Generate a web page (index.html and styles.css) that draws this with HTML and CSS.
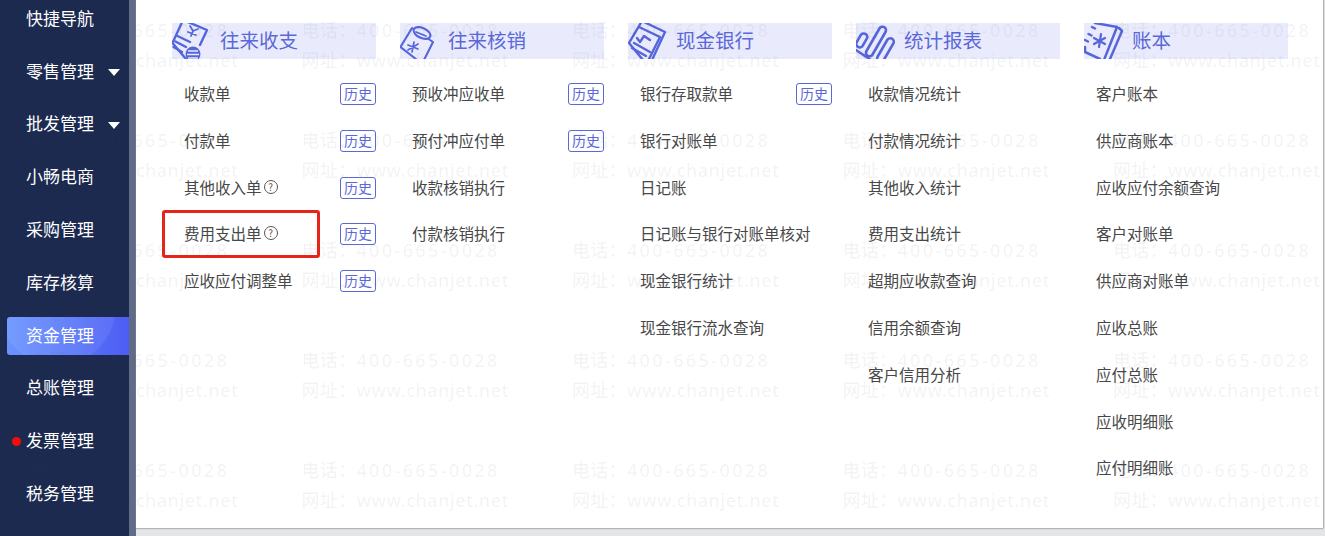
FILE: index.html
```html
<!DOCTYPE html>
<html lang="zh-CN">
<head>
<meta charset="utf-8">
<title>资金管理</title>
<link rel="stylesheet" href="styles.css">
</head>
<body>
<div class="app">
  <aside class="sidebar">
    <ul class="nav">
      <li class="nav-item">快捷导航</li>
      <li class="nav-item has-caret">零售管理</li>
      <li class="nav-item has-caret">批发管理</li>
      <li class="nav-item">小畅电商</li>
      <li class="nav-item">采购管理</li>
      <li class="nav-item">库存核算</li>
      <li class="nav-item active"><span class="nav-pill">资金管理</span></li>
      <li class="nav-item">总账管理</li>
      <li class="nav-item has-dot">发票管理</li>
      <li class="nav-item">税务管理</li>
    </ul>
  </aside>
  <div class="gutter"></div>
  <main class="panel">
    <section class="col">
      <h2 class="col-head">
        <svg class="col-icon" viewBox="0 0 36 36"><g fill="none" stroke="#5565dc" stroke-width="2.400" stroke-linejoin="round" stroke-linecap="round"><path d="M11-3L35 7 28 22M11-3L.5 20M.5 20L14 36"/><path d="M5.500 13L18 19M3.500 18.500L14 24M1.500 24L10 29"/><path d="M18 3l3 5 5-2M21 8l-2 5M16 9l8 3" stroke-width="1.800"/></g><circle cx="21" cy="31" r="7.500" fill="#5565dc"/><path d="M16 28h10M15 31.500h12M16 35h10" stroke="#e9ebfd" stroke-width="1.600"/></svg>
        <span class="head-text">往来收支</span>
      </h2>
      <ul class="rows">
        <li class="row"><span>收款单</span><a class="tag">历史</a></li>
        <li class="row"><span>付款单</span><a class="tag">历史</a></li>
        <li class="row"><span>其他收入单<i class="help">?</i></span><a class="tag">历史</a></li>
        <li class="row marked"><span>费用支出单<i class="help">?</i></span><a class="tag">历史</a></li>
        <li class="row"><span>应收应付调整单</span><a class="tag">历史</a></li>
      </ul>
    </section>
    <section class="col">
      <h2 class="col-head">
        <svg class="col-icon" viewBox="0 0 36 36"><g fill="none" stroke="#5565dc" stroke-width="2.100" stroke-linejoin="round" stroke-linecap="round"><path d="M.5 24L12 5l21 14-9 18M.5 24L16 36"/><ellipse cx="22" cy="10" rx="9" ry="5" transform="rotate(25 22 10)" fill="#e9ebfd"/><path d="M16 9l10 4" stroke-width="1.800"/><path d="M14 19l-2 10M8 22l10 4M8 27l10-6" stroke-width="1.700"/></g></svg>
        <span class="head-text">往来核销</span>
      </h2>
      <ul class="rows">
        <li class="row"><span>预收冲应收单</span><a class="tag">历史</a></li>
        <li class="row"><span>预付冲应付单</span><a class="tag">历史</a></li>
        <li class="row"><span>收款核销执行</span></li>
        <li class="row"><span>付款核销执行</span></li>
      </ul>
    </section>
    <section class="col">
      <h2 class="col-head">
        <svg class="col-icon" viewBox="0 0 36 36"><g fill="none" stroke="#5565dc" stroke-width="2.400" stroke-linejoin="round" stroke-linecap="round"><path d="M14-2L1 20l14 17M14-2L37 9 24 37"/><path d="M11 4L32 14 21 36"/><path d="M6 20l16 9M4 25l14 8M9 15l3 4 4-6 6 4"/></g></svg>
        <span class="head-text">现金银行</span>
      </h2>
      <ul class="rows">
        <li class="row"><span>银行存取款单</span><a class="tag">历史</a></li>
        <li class="row"><span>银行对账单</span></li>
        <li class="row"><span>日记账</span></li>
        <li class="row"><span>日记账与银行对账单核对</span></li>
        <li class="row"><span>现金银行统计</span></li>
        <li class="row"><span>现金银行流水查询</span></li>
      </ul>
    </section>
    <section class="col">
      <h2 class="col-head">
        <svg class="col-icon" viewBox="0 0 36 36"><g fill="none" stroke="#5565dc" stroke-width="2.600" stroke-linecap="round"><rect x="2.500" y="10" width="7" height="15" rx="3.500" transform="rotate(30 6 17)"/><rect x="16.500" y="2" width="7" height="33" rx="3.500" transform="rotate(30 20 18.500)"/><rect x="26" y="14" width="7" height="26" rx="3.500" transform="rotate(30 29.500 27)"/><path d="M0 27l15 10"/></g></svg>
        <span class="head-text">统计报表</span>
      </h2>
      <ul class="rows">
        <li class="row"><span>收款情况统计</span></li>
        <li class="row"><span>付款情况统计</span></li>
        <li class="row"><span>其他收入统计</span></li>
        <li class="row"><span>费用支出统计</span></li>
        <li class="row"><span>超期应收款查询</span></li>
        <li class="row"><span>信用余额查询</span></li>
        <li class="row"><span>客户信用分析</span></li>
      </ul>
    </section>
    <section class="col">
      <h2 class="col-head">
        <svg class="col-icon" viewBox="0 0 36 36"><g fill="none" stroke="#5565dc" stroke-width="2.500" stroke-linejoin="round" stroke-linecap="round"><path d="M11 0L33 4 20 37M1 24v5L16 36"/><path d="M35 5l3 3-12 28"/><path d="M8 4l3 1.500M4.500 11l3 1.500M1 17l3 1.500"/><path d="M17 11l-2 13M10 15l11 6M10 21l11-6" stroke-width="2.200"/></g></svg>
        <span class="head-text">账本</span>
      </h2>
      <ul class="rows">
        <li class="row"><span>客户账本</span></li>
        <li class="row"><span>供应商账本</span></li>
        <li class="row"><span>应收应付余额查询</span></li>
        <li class="row"><span>客户对账单</span></li>
        <li class="row"><span>供应商对账单</span></li>
        <li class="row"><span>应收总账</span></li>
        <li class="row"><span>应付总账</span></li>
        <li class="row"><span>应收明细账</span></li>
        <li class="row"><span>应付明细账</span></li>
      </ul>
    </section>
  </main>
</div>
<div class="watermark" aria-hidden="true">
  <div class="wm"><p class="tel"><span>电话：</span>400-665-0028</p><p class="web"><span>网址：</span>www.chanjet.net</p></div>
  <div class="wm"><p class="tel"><span>电话：</span>400-665-0028</p><p class="web"><span>网址：</span>www.chanjet.net</p></div>
  <div class="wm"><p class="tel"><span>电话：</span>400-665-0028</p><p class="web"><span>网址：</span>www.chanjet.net</p></div>
  <div class="wm"><p class="tel"><span>电话：</span>400-665-0028</p><p class="web"><span>网址：</span>www.chanjet.net</p></div>
  <div class="wm"><p class="tel"><span>电话：</span>400-665-0028</p><p class="web"><span>网址：</span>www.chanjet.net</p></div>
  <div class="wm"><p class="tel"><span>电话：</span>400-665-0028</p><p class="web"><span>网址：</span>www.chanjet.net</p></div>
  <div class="wm"><p class="tel"><span>电话：</span>400-665-0028</p><p class="web"><span>网址：</span>www.chanjet.net</p></div>
  <div class="wm"><p class="tel"><span>电话：</span>400-665-0028</p><p class="web"><span>网址：</span>www.chanjet.net</p></div>
  <div class="wm"><p class="tel"><span>电话：</span>400-665-0028</p><p class="web"><span>网址：</span>www.chanjet.net</p></div>
  <div class="wm"><p class="tel"><span>电话：</span>400-665-0028</p><p class="web"><span>网址：</span>www.chanjet.net</p></div>
  <div class="wm"><p class="tel"><span>电话：</span>400-665-0028</p><p class="web"><span>网址：</span>www.chanjet.net</p></div>
  <div class="wm"><p class="tel"><span>电话：</span>400-665-0028</p><p class="web"><span>网址：</span>www.chanjet.net</p></div>
  <div class="wm"><p class="tel"><span>电话：</span>400-665-0028</p><p class="web"><span>网址：</span>www.chanjet.net</p></div>
  <div class="wm"><p class="tel"><span>电话：</span>400-665-0028</p><p class="web"><span>网址：</span>www.chanjet.net</p></div>
  <div class="wm"><p class="tel"><span>电话：</span>400-665-0028</p><p class="web"><span>网址：</span>www.chanjet.net</p></div>
  <div class="wm"><p class="tel"><span>电话：</span>400-665-0028</p><p class="web"><span>网址：</span>www.chanjet.net</p></div>
  <div class="wm"><p class="tel"><span>电话：</span>400-665-0028</p><p class="web"><span>网址：</span>www.chanjet.net</p></div>
  <div class="wm"><p class="tel"><span>电话：</span>400-665-0028</p><p class="web"><span>网址：</span>www.chanjet.net</p></div>
  <div class="wm"><p class="tel"><span>电话：</span>400-665-0028</p><p class="web"><span>网址：</span>www.chanjet.net</p></div>
  <div class="wm"><p class="tel"><span>电话：</span>400-665-0028</p><p class="web"><span>网址：</span>www.chanjet.net</p></div>
  <div class="wm"><p class="tel"><span>电话：</span>400-665-0028</p><p class="web"><span>网址：</span>www.chanjet.net</p></div>
  <div class="wm"><p class="tel"><span>电话：</span>400-665-0028</p><p class="web"><span>网址：</span>www.chanjet.net</p></div>
  <div class="wm"><p class="tel"><span>电话：</span>400-665-0028</p><p class="web"><span>网址：</span>www.chanjet.net</p></div>
  <div class="wm"><p class="tel"><span>电话：</span>400-665-0028</p><p class="web"><span>网址：</span>www.chanjet.net</p></div>
  <div class="wm"><p class="tel"><span>电话：</span>400-665-0028</p><p class="web"><span>网址：</span>www.chanjet.net</p></div>
</div>
</body>
</html>
```
FILE: styles.css
```css
*, *::before, *::after { box-sizing: border-box; }
html, body { margin: 0; height: 536px; overflow: hidden; }
body {
  position: relative;
  background: #e4e5e7;
  font-family: "Noto Sans CJK SC", "Noto Sans", sans-serif;
}
ul { list-style: none; margin: 0; padding: 0; }
p, h2 { margin: 0; }

.app { display: flex; height: 536px; }

.sidebar { width: 129px; flex: none; background: #1c2a50; overflow: hidden; }
.nav { margin-top: -7.4px; }
.nav-item {
  position: relative;
  height: 52.8px;
  display: flex;
  align-items: center;
  padding: 0 0 3.5px 26px;
  color: #fff;
  font-size: 17px;
  white-space: nowrap;
}
.nav-item.active { padding: 0 0 0 7px; }
.nav-pill {
  flex: 1;
  height: 38px;
  line-height: 35px;
  padding-left: 19px;
  border-radius: 3px 0 0 3px;
  background:
    radial-gradient(circle at 50px -10px, rgba(255,255,255,.07) 58px, transparent 59px),
    linear-gradient(90deg, #6a94ff, #4c5df3);
}
.has-caret::after {
  content: "";
  position: absolute;
  left: 108px;
  top: 23.5px;
  border-left: 6px solid transparent;
  border-right: 6px solid transparent;
  border-top: 7px solid #fff;
}
.has-dot::before {
  content: "";
  position: absolute;
  left: 12px;
  top: 22px;
  width: 9px;
  height: 9px;
  border-radius: 50%;
  background: #f60b0b;
}

.gutter { width: 7px; flex: none; background: #5f6b87; }

.panel {
  width: 1187px;
  height: 528px;
  flex: none;
  display: flex;
  gap: 24px;
  padding: 23px 0 0 36px;
  background: #fff;
  box-shadow: 0 1px 1px #b4b4b4, 1px 0 1px #b4b4b4;
}
.col { width: 204px; flex: none; }
.col-head {
  display: flex;
  align-items: center;
  height: 36px;
  margin-bottom: 11.6px;
  background: #e9ebfd;
  color: #5b68d8;
  font-size: 19.500px;
  font-weight: 400;
  overflow: hidden;
}
.head-text { padding-bottom: 3px; }
.col-icon { width: 36px; height: 36px; flex: none; margin-right: 12px; overflow: visible; }
.row {
  position: relative;
  height: 46.8px;
  display: flex;
  align-items: center;
  justify-content: space-between;
  padding-left: 12px;
  color: #474747;
  font-size: 15.500px;
  white-space: nowrap;
}
.row > span { display: flex; align-items: center; padding-bottom: 2px; }
.tag {
  width: 36px;
  height: 22px;
  border: 1px solid #5b68d8;
  border-radius: 3px;
  color: #5b68d8;
  font-size: 14px;
  line-height: 19px;
  text-align: center;
}
.help {
  width: 14px;
  height: 14px;
  margin-left: 2px;
  border: 1px solid #555;
  border-radius: 50%;
  color: #555;
  font-size: 10px;
  font-style: normal;
  line-height: 12px;
  text-align: center;
}
.marked::after {
  content: "";
  position: absolute;
  left: -10px;
  top: -.5px;
  width: 158px;
  height: 48px;
  border: 3px solid #e8231a;
  border-radius: 3px;
}

.watermark {
  position: absolute;
  inset: 0;
  overflow: hidden;
  pointer-events: none;
  display: grid;
  grid-template-columns: repeat(5, 270.5px);
  grid-auto-rows: 110px;
  padding: 14px 0 0 31px;
}
.wm p {
  height: 30px;
  line-height: 30px;
  color: rgba(70, 70, 100, .065);
  font-family: "Noto Sans", "Noto Sans CJK SC", sans-serif;
  font-size: 18px;
  font-weight: 500;
  white-space: nowrap;
}
.wm span { letter-spacing: .3px; font-family: "Noto Sans CJK SC", sans-serif; }
.tel { letter-spacing: 2.400px; }
.web { letter-spacing: .5px; }
```
